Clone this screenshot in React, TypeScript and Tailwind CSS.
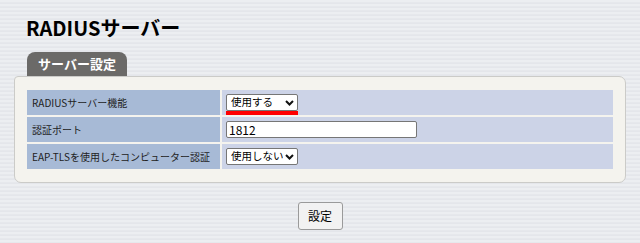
import React from 'react';

const rows = [
  { label: 'RADIUSサーバー機能', kind: 'select', value: '使用する', width: 'w-[72px]', mark: true },
  { label: '認証ポート', kind: 'input', value: '1812' },
  { label: 'EAP-TLSを使用したコンピューター認証', kind: 'select', value: '使用しない', width: 'w-[72px]' },
];

function Chevron() {
  return (
    <svg width="9" height="6" viewBox="0 0 9 6" className="pointer-events-none absolute right-[4px] top-1/2 -translate-y-1/2">
      <path d="M1 1 L4.5 4.5 L8 1" fill="none" stroke="#111" strokeWidth="2" />
    </svg>
  );
}

function Select({ value, width, mark }: { value: string; width?: string; mark?: boolean }) {
  return (
    <div className={`flex flex-col ${width}`}>
      <div className="relative h-[17px]">
        <select
          defaultValue={value}
          className="block w-full h-[17px] appearance-none bg-white border border-[#767676] rounded-[2px] pl-[4px] pr-[14px] text-[10.5px] leading-none text-black"
        >
          <option>使用する</option>
          <option>使用しない</option>
        </select>
        <Chevron />
      </div>
      {mark && <div className="h-[4px] shrink-0 bg-[#ff0000]" />}
    </div>
  );
}

export default function App() {
  return (
    <div
      className="w-[640px] h-[243px] overflow-hidden text-[#222] bg-[repeating-linear-gradient(180deg,#eceef1_0px,#eceef1_2px,#e0e2e7_3px,#e8eaee_4px)]"
      style={{ fontFamily: '"Noto Sans CJK JP", "Noto Sans", sans-serif' }}
    >
      <h1 className="pl-[26px] pt-[14px] h-[52px] text-[20px] font-bold leading-[28px] text-black">RADIUSサーバー</h1>

      <div className="ml-[27px] w-[100px] h-[24px] rounded-t-[8px] bg-[#6b6a68] flex items-center justify-center text-white font-bold text-[13px]">
        サーバー設定
      </div>

      <div className="mx-[14px] rounded-[7px] rounded-tl-[4px] border border-[#cbcbc8] bg-[#f4f3ee] px-[12px] pt-[13px] pb-[13px]">
        <div className="flex flex-col gap-[2px]">
          {rows.map((r) => (
            <div key={r.label} className="flex gap-[2px] h-[25px]">
              <div className="w-[193px] bg-[#a7bad6] flex items-center pl-[5px] text-[10px] whitespace-nowrap text-[#222]">{r.label}</div>
              <div className="flex-1 bg-[#ccd3e7] flex items-center pl-[4px]">
                {r.kind === 'select' ? (
                  <div className={r.mark ? 'pt-[4px]' : ''}>
                    <Select value={r.value} width={r.width} mark={r.mark} />
                  </div>
                ) : (
                  <input
                    defaultValue={r.value}
                    className="block w-[191px] h-[17px] bg-white border border-[#767676] rounded-[2px] px-[2px] text-[12px] leading-none text-black"
                  />
                )}
              </div>
            </div>
          ))}
        </div>
      </div>

      <div className="flex justify-center pt-[19px]">
        <button className="w-[45px] h-[28px] rounded-[3px] border border-[#9a9a9a] bg-[#f2f2f2] text-[12px] text-black">
          設定
        </button>
      </div>
    </div>
  );
}
